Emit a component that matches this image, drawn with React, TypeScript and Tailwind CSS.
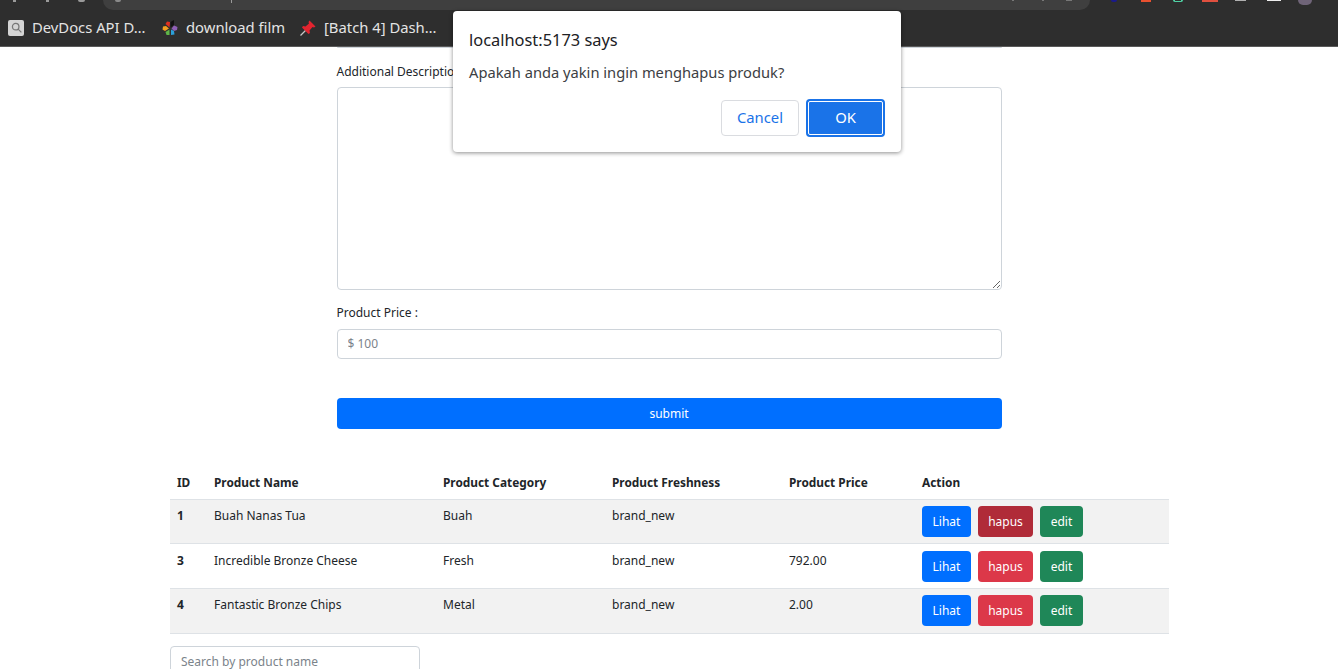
import React from "react";

const F = "font-['Noto_Sans','Open_Sans',sans-serif]";

function Btn({ label, cls }: { label: string; cls: string }) {
  return (
    <button className={`h-[31px] rounded-[4px] text-[12px] leading-[18px] text-white ${cls}`}>{label}</button>
  );
}

const rows = [
  { id: "1", name: "Buah Nanas Tua", cat: "Buah", price: "", bg: "bg-[#f2f2f2]", hapus: "bg-[#b02b38]", h: "h-[44px]", text: "pt-[7px]", act: "pt-[6px]" },
  { id: "3", name: "Incredible Bronze Cheese", cat: "Fresh", price: "792.00", bg: "bg-white", hapus: "bg-[#dc3849]", h: "h-[45px]", text: "pt-[8px]", act: "pt-[7px]" },
  { id: "4", name: "Fantastic Bronze Chips", cat: "Metal", price: "2.00", bg: "bg-[#f2f2f2]", hapus: "bg-[#dc3849]", h: "h-[45px]", text: "pt-[7px]", act: "pt-[6px]" },
];

const widths = ["w-[37px]", "w-[229px]", "w-[169px]", "w-[177px]", "w-[133px]", "w-[254px]"];

export default function App() {
  return (
    <div className={`relative h-[669px] w-[1338px] overflow-hidden bg-white text-[#212529] ${F}`}>
      {/* browser chrome */}
      <div className="h-[47px] border-b border-[#5a5a5a] bg-[#2e2e2e]">
        <div className="flex h-[10px] items-start">
          <div className="flex w-[103px] items-start pl-[13px]">
            <span className="h-[2px] w-[3px] bg-[#9a9a9a]" />
            <span className="ml-[30px] h-[2px] w-[3px] bg-[#9a9a9a]" />
            <span className="ml-[29px] h-[2px] w-[7px] rounded-b-full bg-[#9a9a9a]" />
          </div>
          <div className="flex h-[10px] w-[987px] items-start rounded-b-[10px] bg-[#3f3f3f] pl-[12px]">
            <span className="h-[2px] w-[6px] rounded-b-full bg-[#8a8a8a]" />
            <span className="ml-[110px] h-[3px] w-[1px] bg-[#9a9a9a]" />
            <span className="ml-[780px] h-[1px] w-[2px] bg-[#777777]" />
            <span className="ml-[28px] h-[1px] w-[2px] bg-[#777777]" />
            <span className="ml-[22px] h-[1px] w-[6px] bg-[#777777]" />
          </div>
          <div className="flex items-start pl-[21px]">
            <span className="h-[2px] w-[6px] rounded-b-full bg-[#1a1a8a]" />
            <span className="ml-[24px] h-[2px] w-[10px] bg-[#e8502f]" />
            <span className="ml-[22px] h-[2px] w-[10px] rounded-b-full border-x-2 border-b border-[#4fd1a5]" />
            <span className="ml-[19px] h-[2px] w-[16px] bg-[#e0503f]" />
            <span className="ml-[17px] h-[1px] w-[11px] bg-[#b0b0b0]" />
            <span className="ml-[21px] h-[1px] w-[14px] bg-[#eeeeee]" />
            <span className="ml-[17px] h-[5px] w-[14px] rounded-b-full bg-[#6f6478]" />
          </div>
        </div>
        <div className="flex h-[35px] items-center pl-[8px] text-[14.8px] leading-[20px] text-[#e4e4e4]">
          <span className="mr-[8px] flex h-[16px] w-[16px] items-center justify-center rounded-[2px] bg-[#d4d4d4]">
            <svg viewBox="0 0 16 16" className="h-[13px] w-[13px]" fill="none" stroke="#777" strokeWidth="1.6">
              <circle cx="7" cy="7" r="4" />
              <path d="M10 10l4 4" />
            </svg>
          </span>
          <span className="mb-[2px] w-[130px]">DevDocs API D…</span>
          <svg viewBox="0 0 16 16" className="mr-[8px] h-[16px] w-[16px]">
            <path d="M7.5 7.5L3.5 4 5 1.5 8 2z" fill="#e03020" />
            <path d="M8.5 7.5L8.5 2 12 0v5z" fill="#111" />
            <path d="M9.5 8.5L12 5.5 15.5 7 15 10 12 11z" fill="#8e5fb5" />
            <path d="M9 9.5l3 1.5 0.5 3.5L9 15z" fill="#2b9fd8" />
            <path d="M7.5 9.5V15H4.5L3.5 12z" fill="#5fb548" />
            <path d="M7 8.5L3 11 0.5 9.5 1 6.5 4 6z" fill="#f4a020" />
          </svg>
          <span className="mb-[2px] w-[114px]">download film</span>
          <svg viewBox="0 0 16 16" className="mr-[8px] h-[16px] w-[16px]">
            <path d="M0.5 15.5L6 10" stroke="#c8c8c8" strokeWidth="1.3" />
            <path d="M9.5 0.5L15.5 6.5 14 7.5 12.5 7 9.5 10.5 10 13 8.5 14 2 7.5 3 6 5.5 6.5 9 3.5 8.5 2z" fill="#e3242f" />
          </svg>
          <span className="mb-[2px]">[Batch 4] Dash…</span>
        </div>
      </div>

      {/* form */}
      <div className="mx-auto flex w-[665px] flex-col">
        <div className="h-[1px] rounded-b bg-[#ced4da]" />
        <label className="mt-[15px] text-[12px] leading-[18px]">Additional Description :</label>
        <textarea
          readOnly
          className="mt-[6px] h-[203px] w-full rounded-[4px] border border-[#ced4da] bg-white"
        />
        <label className="mt-[14px] text-[12px] leading-[18px]">Product Price :</label>
        <input
          readOnly
          placeholder="$ 100"
          className="mt-[7px] h-[30px] w-full rounded-[4px] border border-[#ced4da] px-[10px] pb-[2px] text-[12px] outline-none placeholder:text-[#7b838a]"
        />
        <button className="mt-[39px] h-[31px] w-full rounded-[4px] bg-[#006fff] text-[12px] text-white">submit</button>
      </div>

      {/* table */}
      <div className="ml-[170px] mt-[37px] w-[999px] text-[12px] leading-[18px]">
        <div className="flex h-[34px] items-center border-b border-[#dee2e6] pb-[2px] text-[11.85px] font-bold">
          {["ID", "Product Name", "Product Category", "Product Freshness", "Product Price", "Action"].map((h, i) => (
            <div key={h} className={`${widths[i]} pl-[7px]`}>
              {h}
            </div>
          ))}
        </div>
        {rows.map((r) => (
          <div key={r.id} className={`flex ${r.h} border-b border-[#dee2e6] ${r.bg}`}>
            <div className={`${widths[0]} pl-[7px] ${r.text} font-bold`}>{r.id}</div>
            <div className={`${widths[1]} pl-[7px] ${r.text}`}>{r.name}</div>
            <div className={`${widths[2]} pl-[7px] ${r.text}`}>{r.cat}</div>
            <div className={`${widths[3]} pl-[7px] ${r.text}`}>brand_new</div>
            <div className={`${widths[4]} pl-[7px] ${r.text}`}>{r.price}</div>
            <div className={`${widths[5]} flex items-start gap-[7px] pl-[7px] ${r.act}`}>
              <Btn label="Lihat" cls="w-[49px] bg-[#006fff]" />
              <Btn label="hapus" cls={`w-[55px] ${r.hapus}`} />
              <Btn label="edit" cls="w-[43px] bg-[#1f8758]" />
            </div>
          </div>
        ))}
        <input
          readOnly
          placeholder="Search by product name"
          className="mt-[12px] h-[31px] w-[250px] rounded-[4px] border border-[#ced4da] px-[10px] text-[12px] outline-none placeholder:text-[#7b838a]"
        />
      </div>

      {/* alert dialog */}
      <div className="absolute left-[453px] top-[11px] h-[141px] w-[448px] rounded-[4px] bg-white px-[16px] pt-[17px] shadow-[0_1px_4px_rgba(0,0,0,0.45)]">
        <div className="text-[16.4px] leading-[24px] text-[#202124]">localhost:5173 says</div>
        <div className="mt-[10px] text-[14.7px] leading-[20px] text-[#3c4043]">Apakah anda yakin ingin menghapus produk?</div>
        <div className="mt-[17px] flex justify-end gap-[7px]">
          <button className="my-[1px] h-[36px] w-[78px] rounded-[4px] border border-[#dadce0] bg-white pb-[2px] text-[14.8px] text-[#1a73e8]">Cancel</button>
          <button className="h-[38px] w-[79px] rounded-[4px] border-2 border-[#1a73e8] bg-[#1a73e8] pb-[2px] text-[14.8px] text-white outline outline-1 -outline-offset-3 outline-white">OK</button>
        </div>
      </div>
    </div>
  );
}
